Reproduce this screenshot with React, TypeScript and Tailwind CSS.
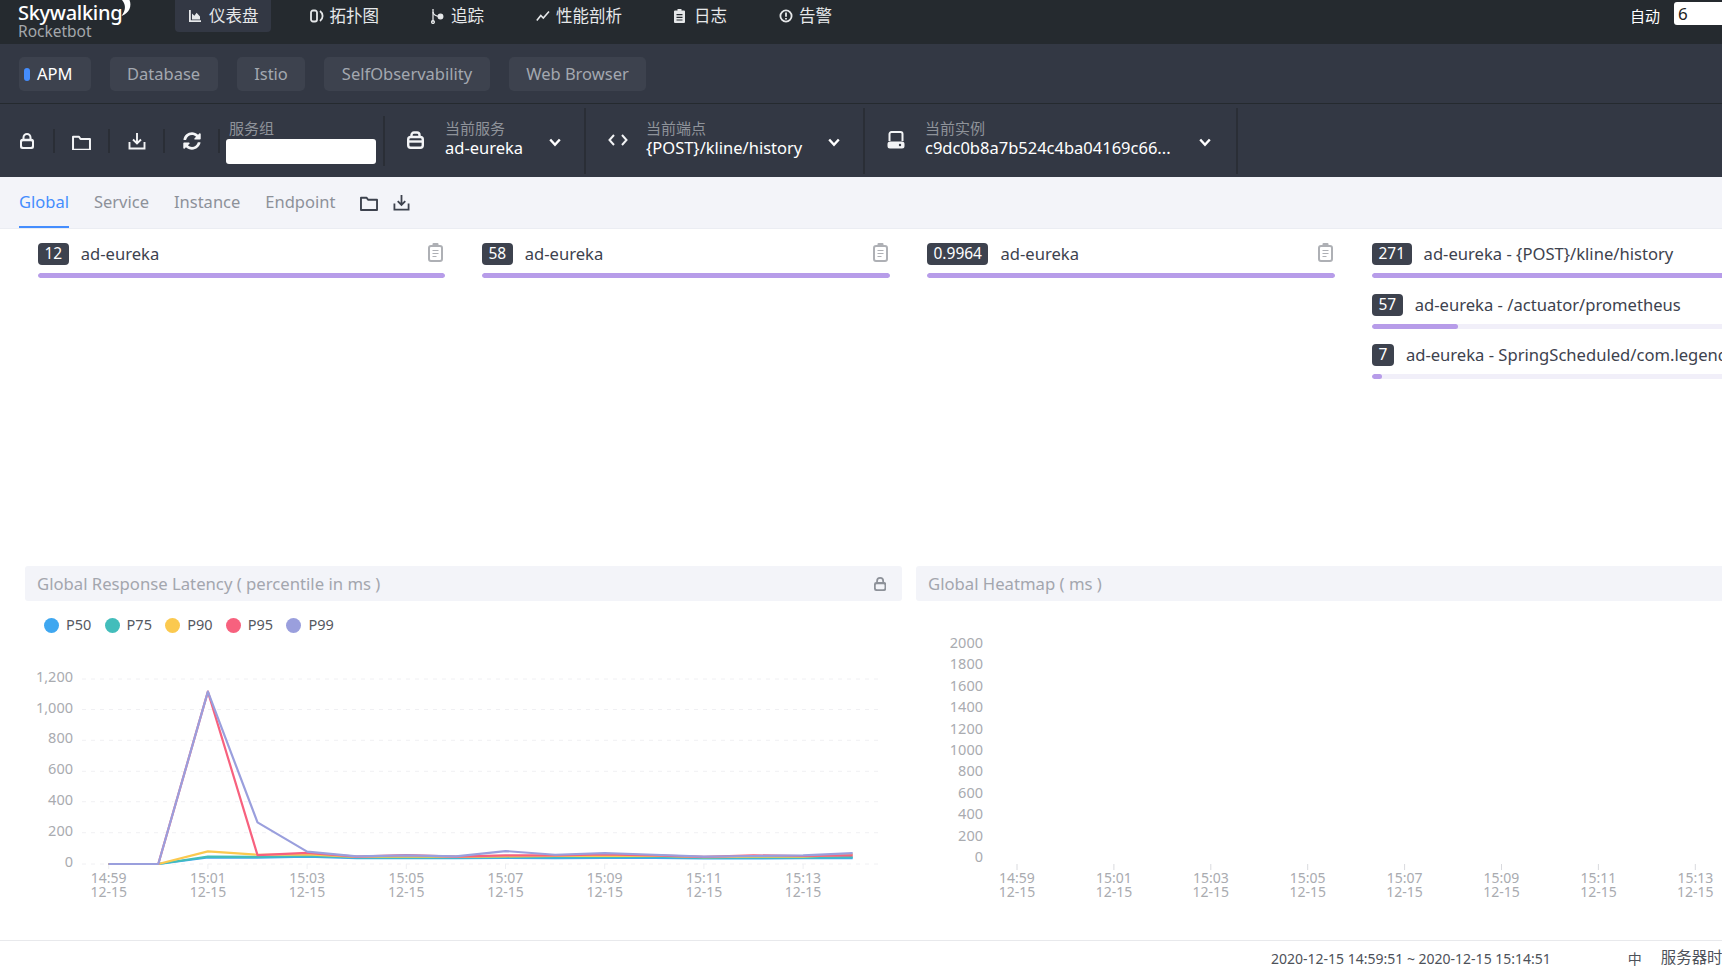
import { FaSyncAlt } from "react-icons/fa";

const font = "font-['Noto_Sans','Noto_Sans_CJK_SC',sans-serif]";

function ChartIcon() {
  return (
    <svg width="12" height="12" viewBox="0 0 12 12" fill="currentColor">
      <path d="M0 0h1.800v10.200H12V12H0z" />
      <path d="M3 9.400V3.500l2.400 2.200 2.200-3 3.400 3.700v3z" />
    </svg>
  );
}

function TopoIcon() {
  return (
    <svg width="14" height="14" viewBox="0 0 14 14" fill="none" stroke="currentColor" strokeWidth="1.800">
      <rect x="1" y="1.500" width="6" height="11" rx="2" />
      <path d="M10 2c2 1.500 2.600 3 2.600 5S12 10.500 10 12" />
    </svg>
  );
}

function TraceIcon() {
  return (
    <svg width="13" height="16" viewBox="0 0 13 16" fill="none" stroke="currentColor" strokeWidth="1.300">
      <path d="M2 1v13" />
      <path d="M2 4c.5 3 3 4 5.500 4.300" />
      <circle cx="9.500" cy="8.500" r="2.300" fill="currentColor" />
      <circle cx="2" cy="14" r="1.400" />
    </svg>
  );
}

function LineIcon() {
  return (
    <svg width="14" height="12" viewBox="0 0 14 12" fill="none" stroke="currentColor" strokeWidth="1.600">
      <path d="M.8 10.500 4.800 5.500l2.500 2.500L13 1.500" />
    </svg>
  );
}

function DocIcon() {
  return (
    <svg width="11" height="14" viewBox="0 0 11 14" fill="currentColor">
      <path fillRule="evenodd" d="M1 1.500h2.500V0h4v1.500H10a1 1 0 0 1 1 1V13a1 1 0 0 1-1 1H1a1 1 0 0 1-1-1V2.500a1 1 0 0 1 1-1zM2.500 5v1.200h6V5zm0 2.800V9h6V7.800zm0 2.600v1.200h6v-1.200z" />
    </svg>
  );
}

function AlertIcon() {
  return (
    <svg width="14" height="14" viewBox="0 0 14 14" fill="none" stroke="currentColor" strokeWidth="1.800">
      <circle cx="7" cy="7" r="5.600" />
      <path d="M7 3.600v4.200M7 8.900v1.500" />
    </svg>
  );
}

function LockIcon({ size = 16 }: { size?: number }) {
  return (
    <svg width={size * 0.875} height={size} viewBox="0 0 14 16" fill="none">
      <path d="M3.500 7V4.500a3.500 3.500 0 0 1 7 0V7" stroke="currentColor" strokeWidth="2" />
      <path
        fillRule="evenodd"
        fill="currentColor"
        d="M2.500 5.800h9A2.500 2.500 0 0 1 14 8.300v5.200a2.500 2.500 0 0 1-2.500 2.500h-9A2.500 2.500 0 0 1 0 13.500V8.300a2.500 2.500 0 0 1 2.500-2.500zM3 8.300a1 1 0 0 0-1 1v3.200a1.500 1.500 0 0 0 1.500 1.500h7a1.500 1.500 0 0 0 1.500-1.500V9.300a1 1 0 0 0-1-1z"
      />
    </svg>
  );
}

function BoxIcon() {
  return (
    <svg width="17" height="18" viewBox="0 0 17 18" fill="none" stroke="currentColor" strokeWidth="2.400">
      <path d="M4.500 7V4a2.500 2.500 0 0 1 2.500-2.500h3A2.500 2.500 0 0 1 12.500 4v3" />
      <rect x="1.200" y="6" width="14.600" height="10.800" rx="2.500" />
      <path d="M1.200 10.500h14.600" />
    </svg>
  );
}

function FolderIcon({ w = 19 }: { w?: number }) {
  return (
    <svg width={w} height={w * 0.84} viewBox="0 0 19 16" fill="none" stroke="currentColor" strokeWidth="2">
      <path d="M1 14.800V1.800h6l1.500 2.200H18v10.800z" strokeLinejoin="round" />
    </svg>
  );
}

function DownloadIcon({ w = 18 }: { w?: number }) {
  return (
    <svg width={w} height={w} viewBox="0 0 18 18" fill="none" stroke="currentColor" strokeWidth="1.900">
      <path d="M9 1v10M5 7.500l4 4 4-4M1.500 10v6.500h15V10" />
    </svg>
  );
}

function CodeIcon() {
  return (
    <svg width="20" height="14" viewBox="0 0 20 14" fill="none" stroke="currentColor" strokeWidth="2">
      <path d="M6 2 1.500 7 6 12M14 2l4.500 5L14 12" />
    </svg>
  );
}

function ServerIcon() {
  return (
    <svg width="18" height="18" viewBox="0 0 18 18" fill="none">
      <path d="M2.500 10V3a2 2 0 0 1 2-2h9a2 2 0 0 1 2 2v7" stroke="currentColor" strokeWidth="2" />
      <path d="M0.500 13a2.500 2.500 0 0 1 2.500-2.500h12a2.500 2.500 0 0 1 2.500 2.500v2a2.500 2.500 0 0 1-2.500 2.500H3A2.500 2.500 0 0 1 .5 15z" fill="currentColor" />
      <circle cx="13" cy="14" r="1.200" fill="#333844" />
    </svg>
  );
}

function Chevron() {
  return (
    <svg className="block" width="12" height="9" viewBox="0 0 12 9" fill="none" stroke="currentColor" strokeWidth="2.400">
      <path d="M1.200 1.500 6 6.800l4.800-5.300" />
    </svg>
  );
}

function ClipboardIcon() {
  return (
    <svg className="block" width="15" height="19" viewBox="0 0 15 19" fill="none" stroke="#aeb0b5" strokeWidth="2">
      <rect x="1" y="3" width="13" height="15" rx="2" />
      <rect x="4.500" y="0" width="6" height="4" fill="#aeb0b5" stroke="none" rx="1" />
      <path d="M4.500 7.500h6M4.500 10.500h6M4.500 13.500h4" strokeWidth="1.200" />
    </svg>
  );
}

const navItems = [
  { label: "拓扑图", icon: <TopoIcon /> },
  { label: "追踪", icon: <TraceIcon /> },
  { label: "性能剖析", icon: <LineIcon /> },
  { label: "日志", icon: <DocIcon /> },
  { label: "告警", icon: <AlertIcon /> },
];

function TopBar() {
  return (
    <div className="flex h-[44px] shrink-0 bg-[#252a2f] text-[#e6e8ea]">
      <div className="relative w-[175px] shrink-0 overflow-hidden pl-[18px] pt-[2px]">
        <div className="text-[20px] font-medium leading-[22px] tracking-[-0.3px] text-white">Skywalking</div>
        <div className="text-[15.500px] leading-[14px] text-[#a3a7ab]">Rocketbot</div>
        <svg className="absolute left-[119px] top-0" width="13" height="17" viewBox="0 0 13 17" fill="#fff">
          <path d="M3 0h7.500c2.500 6 0 13-8 16 4-5 5-11 .5-16z" />
        </svg>
      </div>
      <div className="flex h-[32px] items-center gap-[8px] rounded-b-[4px] bg-[#333844] pl-[14px] pr-[12px] text-[16.500px]">
        <ChartIcon />
        <span>仪表盘</span>
      </div>
      <div className="ml-[26px] flex gap-[26px]">
        {navItems.map((item) => (
          <div key={item.label} className="flex h-[32px] items-center gap-[6px] px-[13px] text-[16.500px]">
            <span className="flex w-[14px] justify-start">{item.icon}</span>
            <span>{item.label}</span>
          </div>
        ))}
      </div>
      <div className="ml-auto flex h-[32px] items-center gap-[14px]">
        <span className="text-[15px] text-white">自动</span>
        <div className="mt-[-5px] h-[23px] w-[48px] rounded-l-[3px] bg-white pl-[4px] text-[17px] leading-[23px] text-[#222]">6</div>
      </div>
    </div>
  );
}

const groups = ["APM", "Database", "Istio", "SelfObservability", "Web Browser"];

function GroupBar() {
  return (
    <div className="flex h-[60px] shrink-0 items-center gap-[19px] border-b border-[#252a2f] bg-[#333844] pl-[19px] text-[16.500px]">
      {groups.map((g, i) => (
        <div
          key={g}
          className={
            i === 0
              ? "flex h-[34px] items-center gap-[7px] rounded-[5px] bg-[#3d424e] pl-[5px] pr-[18px] pt-[1px] text-white"
              : "flex h-[34px] items-center rounded-[5px] bg-[#3d424e] px-[17.500px] pt-[1px] text-[#a3a8b0]"
          }
        >
          {i === 0 && <span className="h-[13px] w-[6px] rounded-full bg-[#448dfe]" />}
          {g}
        </div>
      ))}
    </div>
  );
}

function ToolButton({ children }: { children: React.ReactNode }) {
  return (
    <div className="flex h-[24px] w-[55px] items-center justify-center border-r-2 border-[#2a2e36] text-[#f3f4f6]">{children}</div>
  );
}

function Selector({ icon, label, value, width, chevronGap }: { icon: React.ReactNode; label: string; value: string; width: string; chevronGap: string }) {
  return (
    <div className={`flex h-[66px] items-center border-r-2 border-[#2a2e36] pl-[22px] ${width}`}>
      <span className="flex w-[38px] shrink-0 justify-start pb-[1px] text-[#f3f4f6]">{icon}</span>
      <div className="shrink-0 pb-[5px]">
        <div className="text-[15px] leading-[18px] text-[#8f939a]">{label}</div>
        <div className="whitespace-nowrap text-[16.500px] leading-[21px] text-white">{value}</div>
      </div>
      <span className={`pt-[4px] text-white ${chevronGap}`}>
        <Chevron />
      </span>
    </div>
  );
}

function ToolBar() {
  return (
    <div className="flex h-[73px] shrink-0 items-center bg-[#333844]">
      <ToolButton><LockIcon /></ToolButton>
      <ToolButton><span className="pt-[4px]"><FolderIcon /></span></ToolButton>
      <ToolButton><DownloadIcon /></ToolButton>
      <ToolButton><FaSyncAlt size={18} /></ToolButton>
      <div className="flex h-[50px] w-[165px] flex-col border-r-2 border-[#2a2e36] pl-[6px] pt-[1px]">
        <div className="pl-[3px] text-[15px] leading-[22px] text-[#8f939a]">服务组</div>
        <div className="h-[25px] w-[150px] rounded-[3px] bg-white" />
      </div>
      <Selector icon={<BoxIcon />} label="当前服务" value="ad-eureka" width="w-[201px]" chevronGap="ml-[26px]" />
      <Selector icon={<CodeIcon />} label="当前端点" value="{POST}/kline/history" width="w-[279px]" chevronGap="ml-[26px]" />
      <Selector icon={<ServerIcon />} label="当前实例" value="c9dc0b8a7b524c4ba04169c66..." width="w-[373px]" chevronGap="ml-[28px]" />
    </div>
  );
}

function TabBar() {
  return (
    <div className="flex h-[52px] shrink-0 items-stretch gap-[25px] border-b border-[#ebedf3] bg-[#f3f4f9] pl-[19px] text-[16.500px] text-[#8d9199]">
      <div className="flex items-center border-b-2 border-[#448dfe] pt-[2px] text-[#448dfe]">Global</div>
      <div className="flex items-center">Service</div>
      <div className="flex items-center">Instance</div>
      <div className="flex items-center">Endpoint</div>
      <div className="flex items-center gap-[15px] text-[#3d424e]">
        <span className="pt-[2px]"><FolderIcon w={18} /></span>
        <DownloadIcon w={17} />
      </div>
    </div>
  );
}

function Stat({ value, name, pct, clip }: { value: string; name: string; pct?: number; clip?: boolean }) {
  return (
    <div>
      <div className="flex h-[22px] items-center gap-[12px] whitespace-nowrap">
        <span className="flex h-[22px] items-center rounded-[4px] bg-[#3d424e] px-[6.500px] text-[15.500px] text-white">{value}</span>
        <span className="flex-1 text-[16.600px] text-[#3d424e]">{name}</span>
        {clip && (
          <span className="mr-[2px] mt-[-4px]">
            <ClipboardIcon />
          </span>
        )}
      </div>
      <div className="mt-[8px] h-[5px] w-full overflow-hidden rounded-[3px] bg-[#f1eff9]">
        <div className="h-full rounded-[3px] bg-[#b79ce9]" style={{ width: `${pct ?? 100}%` }} />
      </div>
    </div>
  );
}

function StatsRow() {
  return (
    <div className="flex h-[337px] shrink-0 pl-[18px] pt-[14px]">
      <div className="w-[445px] shrink-0 pl-[20px] pr-[18px]"><Stat value="12" name="ad-eureka" clip /></div>
      <div className="w-[445px] shrink-0 pl-[19px] pr-[18px]"><Stat value="58" name="ad-eureka" clip /></div>
      <div className="w-[445px] shrink-0 pl-[19px] pr-[18px]"><Stat value="0.9964" name="ad-eureka" clip /></div>
      <div className="w-[445px] shrink-0 pl-[19px] pr-[18px]">
        <div className="flex flex-col gap-[16px]">
          <Stat value="271" name="ad-eureka - {POST}/kline/history" />
          <Stat value="57" name="ad-eureka - /actuator/prometheus" pct={21} />
          <div className="mt-[-1px]">
            <Stat value="7" name="ad-eureka - SpringScheduled/com.legend.eureka.job" pct={2.500} />
          </div>
        </div>
      </div>
    </div>
  );
}

const times = ["14:59", "15:01", "15:03", "15:05", "15:07", "15:09", "15:11", "15:13"];

const series = [
  { color: "#3fa7f0", values: [0, 0, 42, 42, 48, 38, 38, 38, 40, 38, 40, 40, 36, 36, 38, 38] },
  { color: "#43bdbb", values: [0, 0, 48, 46, 52, 42, 42, 42, 44, 44, 44, 48, 40, 42, 42, 44] },
  { color: "#fbc94f", values: [0, 0, 82, 60, 62, 46, 50, 46, 50, 52, 52, 54, 44, 48, 48, 62] },
  { color: "#f7617e", values: [0, 0, 1118, 58, 72, 48, 58, 48, 56, 56, 62, 56, 46, 56, 52, 56] },
  { color: "#9a9fdd", values: [0, 0, 1118, 270, 80, 50, 56, 50, 84, 60, 70, 60, 48, 52, 56, 70] },
];

const x0 = 108.700;
const step = 49.600;
const zeroY = 864;
const gridY = [679, 709.500, 740.300, 771.300, 801.700, 832.700, 864];
const yLabels = ["1,200", "1,000", "800", "600", "400", "200", "0"];
const legend = [
  ["P50", "#3fa7f0"],
  ["P75", "#43bdbb"],
  ["P90", "#fbc94f"],
  ["P95", "#f7617e"],
  ["P99", "#9a9fdd"],
];

function toY(v: number) {
  return zeroY - v * (185 / 1200);
}

function LatencyChart() {
  return (
    <svg width="877" height="291" viewBox="25 649 877 291" className="block">
      {gridY.map((y, i) => (
        <g key={y}>
          <line x1="82" x2="878" y1={y} y2={y} stroke="#f0f0f3" strokeDasharray="4 5" />
          <text x="73" y={y + 3} textAnchor="end" fontSize="14.500" fill="#a9abb0">{yLabels[i]}</text>
        </g>
      ))}
      {times.map((t, i) => {
        const x = x0 + i * 2 * step;
        return (
          <g key={t}>
            <line x1={x} x2={x} y1="864" y2="869" stroke="#eeeff2" />
            <text x={x} y="883" textAnchor="middle" fontSize="14" fill="#a9abb0">{t}</text>
            <text x={x} y="897" textAnchor="middle" fontSize="14" fill="#a9abb0">12-15</text>
          </g>
        );
      })}
      {series.map((s) => (
        <polyline
          key={s.color}
          fill="none"
          stroke={s.color}
          strokeWidth="2.200"
          strokeLinejoin="round"
          points={s.values.map((v, i) => `${x0 + i * step},${toY(v)}`).join(" ")}
        />
      ))}
    </svg>
  );
}

const heatLabels = ["2000", "1800", "1600", "1400", "1200", "1000", "800", "600", "400", "200", "0"];

function HeatChart() {
  return (
    <svg width="806" height="339" viewBox="916 601 806 339" className="block">
      {heatLabels.map((l, i) => (
        <text key={l} x="983" y={648 + i * 21.400} textAnchor="end" fontSize="14.500" fill="#a9abb0">{l}</text>
      ))}
      {times.map((t, i) => {
        const x = 1017 + i * 96.900;
        return (
          <g key={t}>
            <line x1={x} x2={x} y1="864" y2="870" stroke="#d9dade" />
            <text x={x} y="883" textAnchor="middle" fontSize="14" fill="#a9abb0">{t}</text>
            <text x={x} y="897" textAnchor="middle" fontSize="14" fill="#a9abb0">12-15</text>
          </g>
        );
      })}
    </svg>
  );
}

function ChartHeader({ title, lock }: { title: string; lock?: boolean }) {
  return (
    <div className="flex h-[35px] items-center justify-between rounded-[3px] bg-[#f3f4f9] pl-[12px] pr-[16px] pt-[1px] text-[16.700px] text-[#a3a6ae]">
      <span>{title}</span>
      {lock && (
        <span className="text-[#8d9199]">
          <LockIcon size={14} />
        </span>
      )}
    </div>
  );
}

function Footer() {
  return (
    <div className="flex h-[26px] shrink-0 items-center border-t border-[#e8e9ec] pl-[1271px] pt-[9px] text-[14px] text-[#4d5159]">
      <span className="whitespace-nowrap">2020-12-15 14:59:51 ~ 2020-12-15 15:14:51</span>
      <span className="ml-[77px]">中</span>
      <span className="ml-[19px] whitespace-nowrap text-[15.400px]">服务器时</span>
    </div>
  );
}

export default function App() {
  return (
    <div className={`flex h-[966px] w-[1722px] flex-col overflow-hidden bg-white ${font}`}>
      <TopBar />
      <GroupBar />
      <ToolBar />
      <TabBar />
      <StatsRow />
      <div className="flex h-[374px] shrink-0 gap-[14px] pl-[25px]">
        <div className="w-[877px] shrink-0">
          <ChartHeader title="Global Response Latency ( percentile in ms )" lock />
          <div className="flex h-[48px] items-center gap-[8px] pl-[19px] text-[14.500px] text-[#55585f]">
            {legend.map(([name, color]) => (
              <div key={name} className="flex w-[52.600px] items-center gap-[7px]">
                <span className="h-[15px] w-[15px] shrink-0 rounded-full" style={{ backgroundColor: color }} />
                <span>{name}</span>
              </div>
            ))}
          </div>
          <LatencyChart />
        </div>
        <div className="w-[877px] shrink-0">
          <ChartHeader title="Global Heatmap ( ms )" />
          <HeatChart />
        </div>
      </div>
      <Footer />
    </div>
  );
}
